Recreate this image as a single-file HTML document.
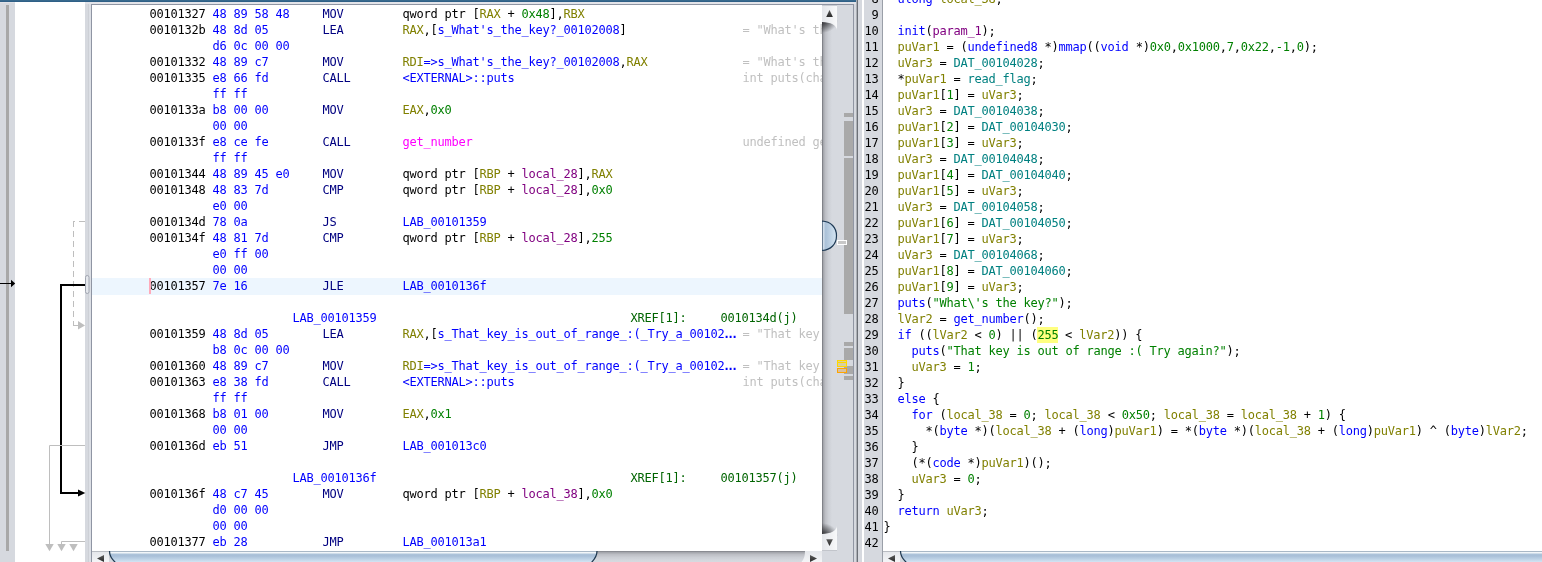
<!DOCTYPE html>
<html lang="en">
<head>
<meta charset="utf-8">
<title>Ghidra CodeBrowser</title>
<style>
html,body{margin:0;padding:0;}
body{width:1542px;height:562px;overflow:hidden;position:relative;background:#d6d9df;
 font-family:"DejaVu Sans Mono","Liberation Mono",monospace;font-size:12px;line-height:16px;letter-spacing:-0.224px;color:#000;}
div,span{box-sizing:border-box;}
.gs{will-change:transform;}
.abs{position:absolute;}
#topbar{left:0;top:0;width:856px;height:2px;background:linear-gradient(to bottom,#38698d 0,#38698d 1px,#2f6087 1px,#2f6087 2px);}
#band1{left:0;top:2px;width:15px;height:1px;background:#e1e2e7;}
#band2{left:85px;top:2px;width:771px;height:2px;background:#e3e4e9;}
#lstrip{left:6px;top:5px;width:3px;height:546px;background:#a8a8a8;}
#margin{left:15px;top:2px;width:70px;height:560px;background:#fff;}
#lborder{left:91px;top:4px;width:763px;height:560px;border:1px solid #8f95a3;border-bottom:none;}
#listing{left:92px;top:5px;width:730px;height:546px;background:#fff;overflow:hidden;}
.r{position:absolute;left:0;width:915px;height:16px;white-space:pre;}
.r.hl{background:#edf6fe;height:17px;}
.r span{position:absolute;top:0;margin-left:0.5px;}
.r .co span,.cd span{position:static;margin-left:0;}
.ca{left:149px;}
.cb{left:212px;color:#0000ff;}
.cm{left:322px;color:#000080;}
.co{left:402px;}
.cc{left:742px;color:#c0c0c0;}
.cl{left:292px;color:#0000ff;}
.cx{left:630px;color:#006400;}
.cr{left:720px;color:#006400;}
.k{color:#000;}
.g{color:#808000;}
.u{color:#0000ff;}
.n{color:#008000;}
.p{color:#800080;}
.f{color:#ff00ff;}
.r .co span.el{color:#0000ff;font-weight:bold;letter-spacing:-3.224px;position:relative;left:-1.6px;}
#cursor{left:149px;top:278px;width:2px;height:16px;background:#ffabbb;z-index:5;}
#st1{left:88px;top:4px;width:1px;height:558px;background:#cdd0d6;}
#st2{left:89px;top:4px;width:2px;height:558px;background:#dcdfe5;}
#decomp{left:883px;top:0;width:659px;height:551px;background:#fff;overflow:hidden;}
#gutter{left:864px;top:0;width:19px;height:562px;background:#d6d9df;border-right:1px solid #9a9fa8;}
.d{position:absolute;left:0;width:1542px;height:16px;white-space:pre;}
.d span.ln{position:absolute;left:0;width:878.5px;text-align:right;}
.d span.cd{position:absolute;left:883.5px;}
.t{color:#0000ff;}
.v{color:#808000;}
.gl{color:#008080;}
.cd span.y{background:#ffff80;display:inline-block;height:16px;vertical-align:top;margin-left:-0.5px;padding-left:0.5px;width:21px;}
</style>
</head>
<body>
<div id="topbar" class="abs"></div>
<div id="band1" class="abs"></div><div id="band2" class="abs"></div>
<div id="lstrip" class="abs"></div>
<div id="margin" class="abs"></div>
<div id="st1" class="abs"></div><div id="st2" class="abs"></div>
<svg class="abs" style="left:0;top:0" width="93" height="562" viewBox="0 0 93 562">
 <!-- current-location arrow -->
 <rect x="0" y="283" width="12" height="1" fill="#000"/>
 <path d="M11 279.800L15.200 283.500L11 287.200Z" fill="#000"/>
 <!-- dashed conditional jump -->
 <path d="M85 221.500H73" stroke="#bebebe" stroke-width="1" fill="none" stroke-dasharray="6 4"/>
 <path d="M73.500 221V325" stroke="#bebebe" stroke-width="1" fill="none" stroke-dasharray="6 4"/>
 <path d="M73 325.500H79" stroke="#bebebe" stroke-width="1" fill="none"/>
 <path d="M78 321L85 325.500L78 329.500Z" fill="#bebebe"/>
 <!-- active jump -->
 <path d="M85 285H61V493H80" stroke="#000" stroke-width="2" fill="none"/>
 <path d="M78 489.400L85.300 493L78 496.600Z" fill="#000"/>
 <!-- gray jumps -->
 <path d="M85 445.500H49.500V545" stroke="#bebebe" stroke-width="1" fill="none"/>
 <path d="M85 541.500H61.500V545" stroke="#bebebe" stroke-width="1" fill="none"/>
 <path d="M45.300 544H53.700L49.500 551.200Z" fill="#bebebe"/>
 <path d="M57.300 544H65.700L61.500 551.200Z" fill="#bebebe"/>
 <path d="M69.300 544H77.700L73.500 551.200Z" fill="#bebebe"/>
 <!-- marker pill -->
 <rect x="85.500" y="275.500" width="3.500" height="18" rx="1.750" fill="#e4e7ec" stroke="#a0a5b0" stroke-width="1"/>
</svg>
<div id="lborder" class="abs"></div>
<div id="listing" class="abs"><div class="abs gs" style="left:-92px;top:-5px;width:915px;height:562px">
<div class="r" style="top:6px"><span class="ca">00101327</span><span class="cb">48 89 58 48</span><span class="cm">MOV</span><span class="co"><span class="k">qword ptr [</span><span class="g">RAX</span><span class="k"> + </span><span class="n">0x48</span><span class="k">],</span><span class="g">RBX</span></span></div>
<div class="r" style="top:22px"><span class="ca">0010132b</span><span class="cb">48 8d 05</span><span class="cm">LEA</span><span class="co"><span class="g">RAX</span><span class="k">,[</span><span class="u">s_What's_the_key?_00102008</span><span class="k">]</span></span><span class="cc">= "What's th</span></div>
<div class="r" style="top:38px"><span class="cb">d6 0c 00 00</span></div>
<div class="r" style="top:54px"><span class="ca">00101332</span><span class="cb">48 89 c7</span><span class="cm">MOV</span><span class="co"><span class="g">RDI</span><span class="u">=&gt;s_What's_the_key?_00102008</span><span class="k">,</span><span class="g">RAX</span></span><span class="cc">= "What's th</span></div>
<div class="r" style="top:70px"><span class="ca">00101335</span><span class="cb">e8 66 fd</span><span class="cm">CALL</span><span class="co"><span class="u">&lt;EXTERNAL&gt;::puts</span></span><span class="cc">int puts(cha</span></div>
<div class="r" style="top:86px"><span class="cb">ff ff</span></div>
<div class="r" style="top:102px"><span class="ca">0010133a</span><span class="cb">b8 00 00</span><span class="cm">MOV</span><span class="co"><span class="g">EAX</span><span class="k">,</span><span class="n">0x0</span></span></div>
<div class="r" style="top:118px"><span class="cb">00 00</span></div>
<div class="r" style="top:134px"><span class="ca">0010133f</span><span class="cb">e8 ce fe</span><span class="cm">CALL</span><span class="co"><span class="f">get_number</span></span><span class="cc">undefined ge</span></div>
<div class="r" style="top:150px"><span class="cb">ff ff</span></div>
<div class="r" style="top:166px"><span class="ca">00101344</span><span class="cb">48 89 45 e0</span><span class="cm">MOV</span><span class="co"><span class="k">qword ptr [</span><span class="g">RBP</span><span class="k"> + </span><span class="p">local_28</span><span class="k">],</span><span class="g">RAX</span></span></div>
<div class="r" style="top:182px"><span class="ca">00101348</span><span class="cb">48 83 7d</span><span class="cm">CMP</span><span class="co"><span class="k">qword ptr [</span><span class="g">RBP</span><span class="k"> + </span><span class="p">local_28</span><span class="k">],</span><span class="n">0x0</span></span></div>
<div class="r" style="top:198px"><span class="cb">e0 00</span></div>
<div class="r" style="top:214px"><span class="ca">0010134d</span><span class="cb">78 0a</span><span class="cm">JS</span><span class="co"><span class="u">LAB_00101359</span></span></div>
<div class="r" style="top:230px"><span class="ca">0010134f</span><span class="cb">48 81 7d</span><span class="cm">CMP</span><span class="co"><span class="k">qword ptr [</span><span class="g">RBP</span><span class="k"> + </span><span class="p">local_28</span><span class="k">],</span><span class="n">255</span></span></div>
<div class="r" style="top:246px"><span class="cb">e0 ff 00</span></div>
<div class="r" style="top:262px"><span class="cb">00 00</span></div>
<div class="r hl" style="top:278px"><span class="ca">00101357</span><span class="cb">7e 16</span><span class="cm">JLE</span><span class="co"><span class="u">LAB_0010136f</span></span></div>
<div class="r" style="top:310px"><span class="cl">LAB_00101359</span><span class="cx">XREF[1]:</span><span class="cr">0010134d(j)</span></div>
<div class="r" style="top:326px"><span class="ca">00101359</span><span class="cb">48 8d 05</span><span class="cm">LEA</span><span class="co"><span class="g">RAX</span><span class="k">,[</span><span class="u">s_That_key_is_out_of_range_:(_Try_a_00102</span><span class="el">...</span></span><span class="cc">= "That key </span></div>
<div class="r" style="top:342px"><span class="cb">b8 0c 00 00</span></div>
<div class="r" style="top:358px"><span class="ca">00101360</span><span class="cb">48 89 c7</span><span class="cm">MOV</span><span class="co"><span class="g">RDI</span><span class="u">=&gt;s_That_key_is_out_of_range_:(_Try_a_00102</span><span class="el">...</span></span><span class="cc">= "That key </span></div>
<div class="r" style="top:374px"><span class="ca">00101363</span><span class="cb">e8 38 fd</span><span class="cm">CALL</span><span class="co"><span class="u">&lt;EXTERNAL&gt;::puts</span></span><span class="cc">int puts(cha</span></div>
<div class="r" style="top:390px"><span class="cb">ff ff</span></div>
<div class="r" style="top:406px"><span class="ca">00101368</span><span class="cb">b8 01 00</span><span class="cm">MOV</span><span class="co"><span class="g">EAX</span><span class="k">,</span><span class="n">0x1</span></span></div>
<div class="r" style="top:422px"><span class="cb">00 00</span></div>
<div class="r" style="top:438px"><span class="ca">0010136d</span><span class="cb">eb 51</span><span class="cm">JMP</span><span class="co"><span class="u">LAB_001013c0</span></span></div>
<div class="r" style="top:470px"><span class="cl">LAB_0010136f</span><span class="cx">XREF[1]:</span><span class="cr">00101357(j)</span></div>
<div class="r" style="top:486px"><span class="ca">0010136f</span><span class="cb">48 c7 45</span><span class="cm">MOV</span><span class="co"><span class="k">qword ptr [</span><span class="g">RBP</span><span class="k"> + </span><span class="p">local_38</span><span class="k">],</span><span class="n">0x0</span></span></div>
<div class="r" style="top:502px"><span class="cb">d0 00 00</span></div>
<div class="r" style="top:518px"><span class="cb">00 00</span></div>
<div class="r" style="top:534px"><span class="ca">00101377</span><span class="cb">eb 28</span><span class="cm">JMP</span><span class="co"><span class="u">LAB_001013a1</span></span></div>
</div></div>
<div id="cursor" class="abs"></div>
<!-- vertical scrollbar -->
<div class="abs" style="left:822px;top:5px;width:31px;height:546px;background:linear-gradient(to right,#6e7076 0px,#a5a7ad 1.5px,#bdbfc5 3.5px,#cccfd5 6.5px,#d6d9df 10px)"></div>
<svg class="abs" style="left:822px;top:0" width="40" height="562" viewBox="0 0 40 562">
 <defs>
  <linearGradient id="bt" x1="0" y1="0" x2="1" y2="0"><stop offset="0" stop-color="#e4e6ea"/><stop offset="1" stop-color="#f8f9fa"/></linearGradient>
  <linearGradient id="sh" x1="0" y1="0" x2="0" y2="1"><stop offset="0" stop-color="#2e2e31" stop-opacity="0.85"/><stop offset="1" stop-color="#2e2e31" stop-opacity="0"/></linearGradient>
  <linearGradient id="sh2" x1="0" y1="1" x2="0" y2="0"><stop offset="0" stop-color="#2e2e31" stop-opacity="0.85"/><stop offset="1" stop-color="#2e2e31" stop-opacity="0"/></linearGradient>
  <radialGradient id="rs1" gradientUnits="userSpaceOnUse" cx="0" cy="20" r="1" gradientTransform="translate(0 20) scale(16 13) translate(0 -20)"><stop offset="0" stop-color="#28282b" stop-opacity="0.95"/><stop offset="0.35" stop-color="#28282b" stop-opacity="0.7"/><stop offset="1" stop-color="#28282b" stop-opacity="0"/></radialGradient>
  <radialGradient id="rs2" gradientUnits="userSpaceOnUse" cx="0" cy="536" r="1" gradientTransform="translate(0 536) scale(16 13) translate(0 -536)"><stop offset="0" stop-color="#28282b" stop-opacity="0.95"/><stop offset="0.35" stop-color="#28282b" stop-opacity="0.7"/><stop offset="1" stop-color="#28282b" stop-opacity="0"/></radialGradient>
  <linearGradient id="tr" x1="0" y1="0" x2="0" y2="1"><stop offset="0" stop-color="#5a5a5a"/><stop offset="1" stop-color="#2a2a2a"/></linearGradient>
  <linearGradient id="vth" x1="0" y1="0" x2="1" y2="0"><stop offset="0" stop-color="#e8eef4"/><stop offset="0.25" stop-color="#aac1d8"/><stop offset="1" stop-color="#d6e6f3"/></linearGradient>
 </defs>
 <!-- shadows under buttons -->
 <rect x="0" y="20" width="16" height="14" fill="url(#rs1)"/>
 <rect x="0" y="522" width="16" height="14" fill="url(#rs2)"/>
 <!-- up button -->
 <path d="M0 5H15V30C15 25.580 8.280 22 0 22Z" fill="url(#bt)"/>
 <rect x="0" y="5" width="15" height="1" fill="#c9ccd2"/>
 <path d="M4.2 17L7.5 10L10.9 17Z" fill="url(#tr)"/>
 <!-- thumb -->
 <path d="M0 221C9 221.500 14.500 227.500 14.500 235.700S9 250 0 250.500Z" fill="url(#vth)" stroke="#1e3a55" stroke-width="1.200"/>
 <!-- down button -->
 <path d="M0 550.500H15V526C15 530.420 8.280 534 0 534Z" fill="url(#bt)"/>
 <rect x="0" y="550" width="15" height="1" fill="#c2c5cb"/>
 <path d="M4.2 539.3L7.5 546L10.9 539.3Z" fill="url(#tr)"/>
 <!-- overview markers -->
 <g fill="#a9a9a9">
  <rect x="22" y="113" width="9" height="4"/>
  <rect x="22" y="121" width="9" height="35"/>
  <rect x="22" y="158" width="9" height="156"/>
  <rect x="22" y="342" width="9" height="4"/>
  <rect x="22" y="348" width="9" height="12"/>
  <rect x="22" y="366" width="9" height="8"/>
  <rect x="22" y="376" width="9" height="4"/>
 </g>
 <rect x="15.5" y="240.5" width="9" height="4" fill="#c8c8c8" stroke="#fff" stroke-width="1"/>
 <rect x="15.5" y="360.5" width="9" height="6" fill="#d8d0a0" stroke="#ffd700" stroke-width="1"/>
 <path d="M15 362.5H25" stroke="#ffd700" stroke-width="1"/>
 <rect x="15.5" y="368.5" width="9" height="4" fill="#d8c0a0" stroke="#ffa500" stroke-width="1"/>
 <!-- right border lines -->
 <rect x="31" y="4" width="1" height="558" fill="#9096a3"/>
 <rect x="34.600" y="0" width="1.400" height="562" fill="#6c7077"/>
</svg>
<!-- horizontal scrollbar listing -->
<div class="abs" style="left:92px;top:551px;width:730px;height:11px;background:linear-gradient(to bottom,#7c7e84 0px,#a5a7ad 1.5px,#bdbfc5 3.5px,#cccfd5 6.5px,#d6d9df 10px)"></div>
<svg class="abs" style="left:92px;top:551px" width="730" height="11" viewBox="0 0 730 11">
 <defs><linearGradient id="th" x1="0" y1="0" x2="0" y2="1">
  <stop offset="0" stop-color="#a9b8c6"/><stop offset="0.075" stop-color="#a9b8c6"/><stop offset="0.095" stop-color="#f2f6f9"/><stop offset="0.165" stop-color="#f2f6f9"/><stop offset="0.22" stop-color="#c6d6e5"/><stop offset="0.3" stop-color="#a9c0d8"/><stop offset="0.42" stop-color="#a9c0d8"/><stop offset="0.92" stop-color="#d2e4f3"/></linearGradient>
  <linearGradient id="bh" x1="0" y1="0" x2="0" y2="1"><stop offset="0" stop-color="#e4e6ea"/><stop offset="1" stop-color="#f4f5f7"/></linearGradient>
 </defs>
 <rect x="0" y="0" width="17" height="11" fill="url(#bh)"/>
 <rect x="0" y="0" width="17" height="1" fill="#b9bcc2"/>
 <path d="M12 4L5 7.500L12 11Z" fill="url(#tr)"/>
 <path d="M713 0H730V11H709.5C712 8 713 5 713 0Z" fill="url(#bh)"/>
 <path d="M718 4L725 7.500L718 11Z" fill="url(#tr)"/>
 <path d="M17.500 0H505C505 5 502 9 499 12H24C20.500 9 17.500 5 17.500 0Z" fill="url(#th)"/>
 <path d="M505 0C505 5 502 9 499 12M24 12C20.500 9 17.500 5 17.500 0" fill="none" stroke="#1e3850" stroke-width="1.200"/>
</svg>
<!-- decompiler -->
<div class="abs" style="left:862px;top:0;width:2px;height:562px;background:#fff"></div>
<div id="gutter" class="abs"></div>
<div id="decomp" class="abs"></div>
<div class="abs gs" style="left:0;top:0;width:1542px;height:551px;overflow:hidden;">
<div class="d" style="top:-9px"><span class="ln">8</span><span class="cd"><span class="k">  </span><span class="t">ulong</span><span class="k"> </span><span class="v">local_38</span><span class="k">;</span></span></div>
<div class="d" style="top:7px"><span class="ln">9</span><span class="cd"></span></div>
<div class="d" style="top:23px"><span class="ln">10</span><span class="cd"><span class="k">  </span><span class="t">init</span><span class="k">(</span><span class="p">param_1</span><span class="k">);</span></span></div>
<div class="d" style="top:39px"><span class="ln">11</span><span class="cd"><span class="k">  </span><span class="v">puVar1</span><span class="k"> = (</span><span class="t">undefined8</span><span class="k"> *)</span><span class="t">mmap</span><span class="k">((</span><span class="t">void</span><span class="k"> *)</span><span class="n">0x0</span><span class="k">,</span><span class="n">0x1000</span><span class="k">,</span><span class="n">7</span><span class="k">,</span><span class="n">0x22</span><span class="k">,</span><span class="n">-1</span><span class="k">,</span><span class="n">0</span><span class="k">);</span></span></div>
<div class="d" style="top:55px"><span class="ln">12</span><span class="cd"><span class="k">  </span><span class="v">uVar3</span><span class="k"> = </span><span class="gl">DAT_00104028</span><span class="k">;</span></span></div>
<div class="d" style="top:71px"><span class="ln">13</span><span class="cd"><span class="k">  *</span><span class="v">puVar1</span><span class="k"> = </span><span class="gl">read_flag</span><span class="k">;</span></span></div>
<div class="d" style="top:87px"><span class="ln">14</span><span class="cd"><span class="k">  </span><span class="v">puVar1</span><span class="k">[</span><span class="n">1</span><span class="k">] = </span><span class="v">uVar3</span><span class="k">;</span></span></div>
<div class="d" style="top:103px"><span class="ln">15</span><span class="cd"><span class="k">  </span><span class="v">uVar3</span><span class="k"> = </span><span class="gl">DAT_00104038</span><span class="k">;</span></span></div>
<div class="d" style="top:119px"><span class="ln">16</span><span class="cd"><span class="k">  </span><span class="v">puVar1</span><span class="k">[</span><span class="n">2</span><span class="k">] = </span><span class="gl">DAT_00104030</span><span class="k">;</span></span></div>
<div class="d" style="top:135px"><span class="ln">17</span><span class="cd"><span class="k">  </span><span class="v">puVar1</span><span class="k">[</span><span class="n">3</span><span class="k">] = </span><span class="v">uVar3</span><span class="k">;</span></span></div>
<div class="d" style="top:151px"><span class="ln">18</span><span class="cd"><span class="k">  </span><span class="v">uVar3</span><span class="k"> = </span><span class="gl">DAT_00104048</span><span class="k">;</span></span></div>
<div class="d" style="top:167px"><span class="ln">19</span><span class="cd"><span class="k">  </span><span class="v">puVar1</span><span class="k">[</span><span class="n">4</span><span class="k">] = </span><span class="gl">DAT_00104040</span><span class="k">;</span></span></div>
<div class="d" style="top:183px"><span class="ln">20</span><span class="cd"><span class="k">  </span><span class="v">puVar1</span><span class="k">[</span><span class="n">5</span><span class="k">] = </span><span class="v">uVar3</span><span class="k">;</span></span></div>
<div class="d" style="top:199px"><span class="ln">21</span><span class="cd"><span class="k">  </span><span class="v">uVar3</span><span class="k"> = </span><span class="gl">DAT_00104058</span><span class="k">;</span></span></div>
<div class="d" style="top:215px"><span class="ln">22</span><span class="cd"><span class="k">  </span><span class="v">puVar1</span><span class="k">[</span><span class="n">6</span><span class="k">] = </span><span class="gl">DAT_00104050</span><span class="k">;</span></span></div>
<div class="d" style="top:231px"><span class="ln">23</span><span class="cd"><span class="k">  </span><span class="v">puVar1</span><span class="k">[</span><span class="n">7</span><span class="k">] = </span><span class="v">uVar3</span><span class="k">;</span></span></div>
<div class="d" style="top:247px"><span class="ln">24</span><span class="cd"><span class="k">  </span><span class="v">uVar3</span><span class="k"> = </span><span class="gl">DAT_00104068</span><span class="k">;</span></span></div>
<div class="d" style="top:263px"><span class="ln">25</span><span class="cd"><span class="k">  </span><span class="v">puVar1</span><span class="k">[</span><span class="n">8</span><span class="k">] = </span><span class="gl">DAT_00104060</span><span class="k">;</span></span></div>
<div class="d" style="top:279px"><span class="ln">26</span><span class="cd"><span class="k">  </span><span class="v">puVar1</span><span class="k">[</span><span class="n">9</span><span class="k">] = </span><span class="v">uVar3</span><span class="k">;</span></span></div>
<div class="d" style="top:295px"><span class="ln">27</span><span class="cd"><span class="k">  </span><span class="t">puts</span><span class="k">(</span><span class="n">"What\'s the key?"</span><span class="k">);</span></span></div>
<div class="d" style="top:311px"><span class="ln">28</span><span class="cd"><span class="k">  </span><span class="v">lVar2</span><span class="k"> = </span><span class="t">get_number</span><span class="k">();</span></span></div>
<div class="d" style="top:327px"><span class="ln">29</span><span class="cd"><span class="k">  </span><span class="t">if</span><span class="k"> ((</span><span class="v">lVar2</span><span class="k"> &lt; </span><span class="n">0</span><span class="k">) || (</span><span class="n y">255</span><span class="k"> &lt; </span><span class="v">lVar2</span><span class="k">)) {</span></span></div>
<div class="d" style="top:343px"><span class="ln">30</span><span class="cd"><span class="k">    </span><span class="t">puts</span><span class="k">(</span><span class="n">"That key is out of range :( Try again?"</span><span class="k">);</span></span></div>
<div class="d" style="top:359px"><span class="ln">31</span><span class="cd"><span class="k">    </span><span class="v">uVar3</span><span class="k"> = </span><span class="n">1</span><span class="k">;</span></span></div>
<div class="d" style="top:375px"><span class="ln">32</span><span class="cd"><span class="k">  }</span></span></div>
<div class="d" style="top:391px"><span class="ln">33</span><span class="cd"><span class="k">  </span><span class="t">else</span><span class="k"> {</span></span></div>
<div class="d" style="top:407px"><span class="ln">34</span><span class="cd"><span class="k">    </span><span class="t">for</span><span class="k"> (</span><span class="v">local_38</span><span class="k"> = </span><span class="n">0</span><span class="k">; </span><span class="v">local_38</span><span class="k"> &lt; </span><span class="n">0x50</span><span class="k">; </span><span class="v">local_38</span><span class="k"> = </span><span class="v">local_38</span><span class="k"> + </span><span class="n">1</span><span class="k">) {</span></span></div>
<div class="d" style="top:423px"><span class="ln">35</span><span class="cd"><span class="k">      *(</span><span class="t">byte</span><span class="k"> *)(</span><span class="v">local_38</span><span class="k"> + (</span><span class="t">long</span><span class="k">)</span><span class="v">puVar1</span><span class="k">) = *(</span><span class="t">byte</span><span class="k"> *)(</span><span class="v">local_38</span><span class="k"> + (</span><span class="t">long</span><span class="k">)</span><span class="v">puVar1</span><span class="k">) ^ (</span><span class="t">byte</span><span class="k">)</span><span class="v">lVar2</span><span class="k">;</span></span></div>
<div class="d" style="top:439px"><span class="ln">36</span><span class="cd"><span class="k">    }</span></span></div>
<div class="d" style="top:455px"><span class="ln">37</span><span class="cd"><span class="k">    (*(</span><span class="t">code</span><span class="k"> *)</span><span class="v">puVar1</span><span class="k">)();</span></span></div>
<div class="d" style="top:471px"><span class="ln">38</span><span class="cd"><span class="k">    </span><span class="v">uVar3</span><span class="k"> = </span><span class="n">0</span><span class="k">;</span></span></div>
<div class="d" style="top:487px"><span class="ln">39</span><span class="cd"><span class="k">  }</span></span></div>
<div class="d" style="top:503px"><span class="ln">40</span><span class="cd"><span class="k">  </span><span class="t">return</span><span class="k"> </span><span class="v">uVar3</span><span class="k">;</span></span></div>
<div class="d" style="top:519px"><span class="ln">41</span><span class="cd"><span class="k">}</span></span></div>
<div class="d" style="top:535px"><span class="ln">42</span><span class="cd"></span></div>
</div>
<!-- horizontal scrollbar decompiler -->
<div class="abs" style="left:883px;top:551px;width:659px;height:11px;background:#d6d9df"></div>
<svg class="abs" style="left:883px;top:551px" width="659" height="11" viewBox="0 0 659 11">
 <rect x="0" y="0" width="17" height="11" fill="url(#bh)"/>
 <rect x="0" y="0" width="17" height="1" fill="#b9bcc2"/>
 <path d="M12 4L5 7.500L12 11Z" fill="url(#tr)"/>
 <path d="M17.500 0H700V12H24C20.500 9 17.500 5 17.500 0Z" fill="url(#th)"/>
 <path d="M24 12C20.500 9 17.500 5 17.500 0" fill="none" stroke="#1e3850" stroke-width="1.200"/>
</svg>
</body>
</html>
